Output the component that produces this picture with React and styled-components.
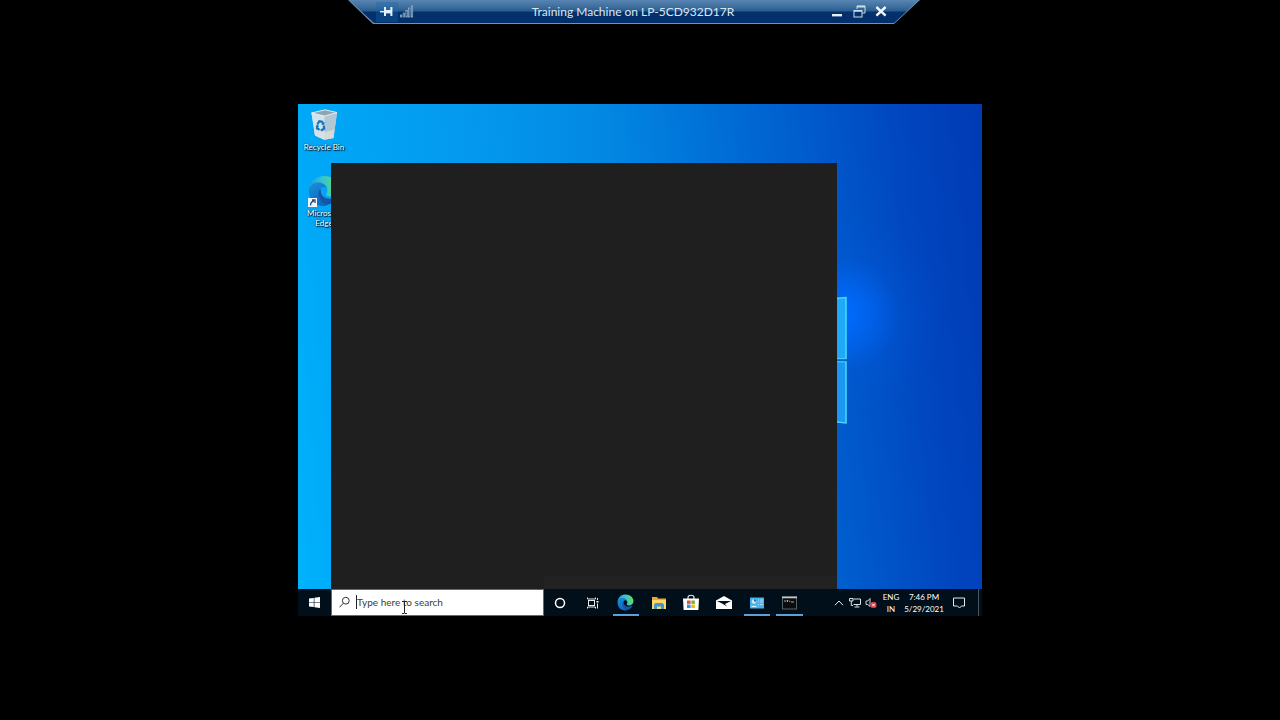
import React, { useState } from 'react';
import styled, { createGlobalStyle } from 'styled-components';

const GlobalStyle = createGlobalStyle`
  * {
    box-sizing: border-box;
  }

  body {
    margin: 0;
    background: #000;
    font-family: Lato, 'Open Sans', sans-serif;
  }

  button {
    padding: 0;
    border: none;
    background: none;
    color: inherit;
    font: inherit;
  }
`;

const Page = styled.div`
  position: relative;
  display: flex;
  align-items: center;
  justify-content: center;
  min-height: 100vh;
  background: #000;
`;

/* Connection bar */

const ConnectionBar = styled.header`
  position: absolute;
  top: 0;
  left: 50%;
  width: 572px;
  max-width: 100%;
  height: 24px;
  margin-left: -292px;
  padding: 0 30px 1px 28px;
  display: grid;
  grid-template-columns: 1fr auto 1fr;
  align-items: center;
  color: #dbe8f4;
  background: #6d93b8;
  clip-path: polygon(0 0, 100% 0, 546px 100%, 25px 100%);
  isolation: isolate;

  &::before {
    content: '';
    position: absolute;
    inset: 0 1px 1px;
    z-index: -1;
    background: linear-gradient(#5885b3 0, #41719f 6px, #2a5c92 11px, #043169 12px, #02306c 23px);
    clip-path: polygon(0 0, 100% 0, 545px 100%, 25px 100%);
  }
`;

const BarGroup = styled.div`
  display: flex;
  align-items: center;
  justify-content: ${({ $end }) => ($end ? 'flex-end' : 'flex-start')};
  gap: ${({ $end }) => ($end ? '4px' : '0')};
`;

const BarTitle = styled.h1`
  margin: 0;
  font-size: 12px;
  font-weight: 400;
  line-height: 20px;
  white-space: nowrap;
`;

const BarButton = styled.button`
  display: grid;
  place-items: center;
  width: ${({ $pinned }) => ($pinned ? '22px' : '18px')};
  height: 20px;
  background: ${({ $pinned }) => ($pinned ? 'rgba(24, 104, 176, 0.35)' : 'none')};
`;

/* Remote desktop */

const Screen = styled.main`
  display: flex;
  flex-direction: column;
  width: 100%;
  max-width: 684px;
  min-height: 512px;
  overflow: hidden;
`;

const Desktop = styled.section`
  position: relative;
  flex: 1;
  display: flex;
  background:
    radial-gradient(circle at 545px 210px, rgba(0, 110, 255, 0.95) 0, rgba(0, 104, 250, 0.75) 24px, rgba(0, 92, 225, 0.25) 56px, rgba(0, 80, 200, 0) 100px),
    linear-gradient(84deg, #00b2fc 0%, #00a8f7 8%, #0499ee 30%, #0288e3 48%, #006ed6 64%, #0058ca 78%, #0047c0 88%, #003ab3 100%);
`;

const IconColumn = styled.div`
  display: flex;
  flex-direction: column;
  gap: 14px;
  width: 52px;
  padding-top: 3px;
`;

const DesktopIcon = styled.button`
  display: flex;
  flex-direction: column;
  align-items: center;
  min-height: 52px;
`;

const IconLabel = styled.span`
  width: 46px;
  color: #fff;
  font-size: 8px;
  line-height: 10px;
  text-align: center;
  text-shadow: 1px 1px 1px #000, 0 0 2px rgba(0, 0, 0, 0.8);
`;

const WindowsLogo = styled.svg`
  position: absolute;
  top: 188px;
  left: 427px;
`;

const SearchFlyout = styled.div`
  position: absolute;
  inset: 59px 145px 0 33px;
  display: flex;
  align-items: flex-end;
  justify-content: flex-end;
  background: #1f1f1f;
`;

const FlyoutFooter = styled.div`
  width: 293px;
  height: 13px;
  background: #222;
`;

/* Taskbar */

const Taskbar = styled.footer`
  display: flex;
  height: 27px;
  color: #fff;
  background: #010f1b;
`;

const StartButton = styled.button`
  display: grid;
  place-items: center;
  width: 33px;
`;

const SearchBox = styled.label`
  position: relative;
  display: flex;
  align-items: center;
  gap: 6px;
  width: 213px;
  padding: 0 0 2px 7px;
  background: #fff;
  border: 1px solid #0f7fdc;
`;

const SearchInput = styled.input`
  flex: 1;
  min-width: 0;
  padding: 0;
  border: none;
  border-left: 1px solid #222;
  outline: none;
  height: 14px;
  background: none;
  color: #222;
  font-family: inherit;
  font-size: 10px;
  line-height: 14px;

  &::placeholder {
    color: #3c3c3c;
    opacity: 1;
  }
`;

const Pointer = styled.svg`
  position: absolute;
  top: 11px;
  left: 69px;
`;

const AppList = styled.nav`
  display: flex;
  width: 262px;
`;

const AppButton = styled.button`
  flex: 1;
  display: grid;
  place-items: center;
  position: relative;

  &::after {
    content: '';
    position: absolute;
    right: 3px;
    bottom: 0;
    left: 3px;
    height: 2px;
    background: ${({ $running }) => ($running ? '#5d9fd6' : 'transparent')};
  }
`;

const Tray = styled.div`
  display: flex;
  align-items: center;
  margin-left: auto;
`;

const TrayButton = styled.button`
  display: grid;
  place-items: center;
  width: ${({ $width }) => $width || 16}px;
  height: 27px;
  font-size: 8px;
  line-height: 12px;
  text-align: center;
  white-space: nowrap;
`;

const Lines = styled.span`
  display: flex;
  flex-direction: column;
  align-items: center;
`;

const ShowDesktop = styled.button`
  width: 4px;
  height: 27px;
  margin-left: 5px;
  border-left: 1px solid #4a545e;
`;

/* Icons */

const PinIcon = () => (
  <svg width="14" height="12" viewBox="0 0 14 12" fill="#e4f0fa">
    <rect x="0" y="5" width="5" height="1.4" />
    <rect x="4" y="1" width="2" height="9" />
    <rect x="6" y="4" width="5" height="3.4" />
    <rect x="10.4" y="1" width="2" height="9" />
  </svg>
);

const SignalIcon = () => (
  <svg width="14" height="13" viewBox="0 0 14 13" fill="#1d4a80" stroke="#9dbad6" strokeWidth="0.7">
    <rect x="0.5" y="10" width="1.4" height="2" />
    <rect x="3.2" y="8" width="1.4" height="4" />
    <rect x="5.9" y="5.5" width="1.4" height="6.5" />
    <rect x="8.6" y="3" width="1.4" height="9" />
    <rect x="11.3" y="1" width="1.4" height="11" />
  </svg>
);

const MinimizeIcon = () => (
  <svg width="12" height="12" viewBox="0 0 12 12">
    <rect x="1" y="8" width="10" height="2.4" fill="#e8f1f9" />
  </svg>
);

const RestoreIcon = () => (
  <svg width="13" height="13" viewBox="0 0 13 13" fill="none" stroke="#c9dcea">
    <path d="M4 4V1h8v7H9" />
    <path d="M4 1.6h8" strokeWidth="1.6" />
    <rect x="1" y="5.5" width="8" height="6.5" />
    <path d="M1 6h8" strokeWidth="1.6" />
  </svg>
);

const CloseIcon = () => (
  <svg width="12" height="12" viewBox="0 0 12 12" stroke="#eff6fa" strokeWidth="2.4">
    <path d="M1.4 1l9.2 8.6M10.6 1l-9.2 8.6" />
  </svg>
);

const RecycleBinIcon = () => (
  <svg width="30" height="35" viewBox="0 0 30 35">
    <path d="M2.500 6L16 2.800 28 5.500 24.500 31l-9 1.800L6 28.500z" fill="#c9dce6" />
    <path d="M2.500 6L15.500 9l-.2 23.800L6 28.500z" fill="#d3e3ec" />
    <path d="M15.500 9L28 5.500 24.500 31l-9.200 1.800z" fill="#b1c7d3" />
    <path d="M5 22l10.300 3.500 10-3L24.500 31l-9.200 1.800L6 28.500z" fill="#dedfdf" opacity="0.8" />
    <path d="M2.500 6L16 2.800 28 5.500 15.500 9z" fill="#8ba5b3" stroke="#eef7fb" strokeWidth="0.8" />
    <g fill="none" stroke="#1474c4" strokeWidth="2.200">
      <path d="M8.500 17.200l1.800-3 2.800.6 1 2" />
      <path d="M14.600 18.500l.6 3.200-2.500 1.400" />
      <path d="M10.600 22.800l-2.600-1.300.4-2.500" />
    </g>
    <path d="M12 17.400l3.200.7.4-3.200zM13.400 21.200l-2.400 1.800 2.400 1.800zM6.500 19.400l2-2.400 1.500 2.700z" fill="#1474c4" />
  </svg>
);

const EdgeIcon = ({ size, id }) => (
  <svg width={size} height={size} viewBox="0 0 32 32">
    <defs>
      <linearGradient id={`${id}-top`} x1="0" y1="0.6" x2="1" y2="0.5">
        <stop offset="0" stopColor="#1e9be0" />
        <stop offset="0.5" stopColor="#35c4d2" />
        <stop offset="1" stopColor="#68dd58" />
      </linearGradient>
      <linearGradient id={`${id}-left`} x1="0" y1="0" x2="0.4" y2="1">
        <stop offset="0" stopColor="#1a8fd8" />
        <stop offset="1" stopColor="#0f68bd" />
      </linearGradient>
    </defs>
    <path d="M1 15C2 6 8 1 16 1c9 0 15 6 15 12.500 0 5-4 8-8.500 8-3.500 0-5-1.500-4-3 1-1.500 1.200-3 .5-5C17 9.500 13 8 9.500 8.500 5 9 2 12 1 15z" fill={`url(#${id}-top)`} />
    <path d="M1 16c0-5 4-8.500 9-8.500 5 0 8 2.500 9 5.500-2-1.500-5-1.500-6.500.5C9 18 12 27 20 29.500c-1.500 1-3 1.500-5 1.500C7 31 1 24.500 1 16z" fill={`url(#${id}-left)`} />
    <path d="M12.500 13.500C8.500 18 11 27 19 30c4.500-.8 8-3.500 10.200-7 .4-.8-.2-1.200-.9-.8-7 3.300-14.300.8-15.300-4.400-.3-1.600-.3-3-.5-4.300z" fill="#1554a6" />
  </svg>
);

const ShortcutBadge = styled.svg`
  position: absolute;
  left: 0;
  bottom: 1px;
`;

const ShortcutIcon = styled.span`
  position: relative;
  display: grid;
  place-items: center;
  width: 32px;
  height: 35px;
`;

const StartIcon = () => (
  <svg width="11" height="11" viewBox="0 0 11 11" fill="#fff">
    <path d="M0 1.600l4.800-.7v4.300H0zM5.400.8L11 0v5.200H5.400zM0 5.800h4.800v4.300L0 9.400zM5.400 5.800H11V11l-5.600-.8z" />
  </svg>
);

const SearchIcon = () => (
  <svg width="11" height="12" viewBox="0 0 11 12" fill="none" stroke="#333">
    <circle cx="6.800" cy="4.700" r="3.400" />
    <path d="M4.400 7.200L.5 11.300" />
  </svg>
);

const CortanaIcon = () => (
  <svg width="12" height="12" viewBox="0 0 12 12" fill="none" stroke="#fff" strokeWidth="1.500">
    <circle cx="6" cy="6" r="4.500" />
  </svg>
);

const TaskViewIcon = () => (
  <svg width="13" height="12" viewBox="0 0 13 12" fill="none" stroke="#e6eaed">
    <rect x="1.500" y="3.500" width="6" height="5" />
    <path d="M.5.5v1.500h8V.5M.5 11.500V10h8v1.500M10.500 1v2M10.500 6.500v5" />
    <rect x="9.500" y="4" width="2" height="1.500" fill="#fff" stroke="none" />
  </svg>
);

const ExplorerIcon = () => (
  <svg width="16" height="14" viewBox="0 0 16 14">
    <path d="M1 1h5l1 1.500h8V13H1z" fill="#e5aa2c" />
    <path d="M1 4h14v9H1z" fill="#fbd869" />
    <path d="M3 13V8.500L4.500 7h7L13 8.500V13h-3v-2.500H6V13z" fill="#4598c9" />
  </svg>
);

const StoreIcon = () => (
  <svg width="16" height="17" viewBox="0 0 16 17">
    <path d="M5 5V3.500C5 .5 11 .5 11 3.500V5" fill="none" stroke="#dfe5e8" strokeWidth="1.200" />
    <path d="M0 4.500h16l-.6 11.500H.6z" fill="#fff" />
    <rect x="4" y="6.500" width="3.600" height="3.400" fill="#e8532b" />
    <rect x="8.300" y="6.500" width="3.600" height="3.400" fill="#78b72b" />
    <rect x="4" y="10.600" width="3.600" height="3.400" fill="#2494dc" />
    <rect x="8.300" y="10.600" width="3.600" height="3.400" fill="#f5b614" />
  </svg>
);

const MailIcon = () => (
  <svg width="16" height="14" viewBox="0 0 16 14">
    <path d="M0 4.500L8 0l8 4.500V13H0z" fill="#fff" />
    <path d="M1 5h14L9 8l2 2.500L6.500 7.800z" fill="#07131c" />
  </svg>
);

const ControlPanelIcon = () => (
  <svg width="14" height="12" viewBox="0 0 14 12">
    <rect width="14" height="11" y="0.500" rx="0.500" fill="#48b2ed" />
    <circle cx="4" cy="4.500" r="2.200" fill="#c8ebfb" />
    <path d="M4 4.500V2.300a2.200 2.200 0 0 1 2.200 2.200z" fill="#1766ae" />
    <path d="M8 3h1M10 3h3M8 5h1M10 5h3M8 7.500h1M10 7.500h3" stroke="#a5dcf8" />
    <path d="M1.500 9.500h5" stroke="#d4f0fc" strokeWidth="1.200" />
  </svg>
);

const TerminalIcon = () => (
  <svg width="16" height="14" viewBox="0 0 16 14">
    <rect x="0.500" y="0.500" width="14" height="12.500" fill="#0b0c0d" stroke="#596064" />
    <path d="M0 1.500h15" stroke="#bfc5c9" strokeWidth="1.600" />
    <path d="M2 5h2.500M5.500 4v2M7 4.500l1 1.500M9 6h3" stroke="#b5babd" strokeWidth="0.900" />
  </svg>
);

const ChevronIcon = () => (
  <svg width="10" height="6" viewBox="0 0 10 6" fill="none" stroke="#e8ecef">
    <path d="M1 5.200L5 1l4 4.200" />
  </svg>
);

const NetworkIcon = () => (
  <svg width="12" height="11" viewBox="0 0 12 11" fill="none" stroke="#dde2e6">
    <path d="M4.500 2h7v5.500h-7M8 7.500v2M5.500 10h5" />
    <path d="M.5 1.500h3.500v2.500H.5zM2.300 4v4.500H4" />
  </svg>
);

const VolumeIcon = () => (
  <svg width="12" height="12" viewBox="0 0 12 12">
    <path d="M1 4h1.800L5 1.500v8L2.800 7.500H1z" fill="none" stroke="#e3e7ea" strokeWidth="0.900" />
    <rect x="5.500" y="5" width="6" height="6" rx="2" fill="#dd3a44" />
    <path d="M7.200 6.700l2.600 2.600M9.800 6.700L7.200 9.300" stroke="#fff" />
  </svg>
);

const NotificationIcon = () => (
  <svg width="12" height="12" viewBox="0 0 12 12" fill="none" stroke="#e6eaed">
    <path d="M.5 1h11v8H8.500L6.500 11 4.500 9h-4z" />
  </svg>
);

const apps = [
  { name: 'Cortana', Icon: CortanaIcon },
  { name: 'Task View', Icon: TaskViewIcon },
  { name: 'Microsoft Edge', Icon: () => <EdgeIcon size={17} id="taskbar-edge" />, running: true },
  { name: 'File Explorer', Icon: ExplorerIcon },
  { name: 'Microsoft Store', Icon: StoreIcon },
  { name: 'Mail', Icon: MailIcon },
  { name: 'Control Panel', Icon: ControlPanelIcon, running: true },
  { name: 'Command Prompt', Icon: TerminalIcon, running: true },
];

const TopBar = () => (
  <ConnectionBar>
    <BarGroup>
      <BarButton $pinned aria-label="Pin"><PinIcon /></BarButton>
      <BarButton aria-label="Connection quality"><SignalIcon /></BarButton>
    </BarGroup>
    <BarTitle>Training Machine on LP-5CD932D17R</BarTitle>
    <BarGroup $end>
      <BarButton aria-label="Minimize"><MinimizeIcon /></BarButton>
      <BarButton aria-label="Restore"><RestoreIcon /></BarButton>
      <BarButton aria-label="Close"><CloseIcon /></BarButton>
    </BarGroup>
  </ConnectionBar>
);

const Wallpaper = () => (
  <WindowsLogo width="122" height="133" viewBox="0 0 122 133" aria-hidden="true">
    <g stroke="#45dcfb" strokeWidth="1.500">
      <path d="M0 16L121 5.500v61.500H0z" fill="#1fa9f8" />
      <path d="M0 69.500h121V131L0 118z" fill="#1b98f4" />
    </g>
    <path d="M0 68.200h122" stroke="#0565c4" strokeWidth="2" />
  </WindowsLogo>
);

const App = () => {
  const [query, setQuery] = useState('');

  return (
    <>
      <GlobalStyle />
      <Page>
        <TopBar />
        <Screen>
          <Desktop>
            <IconColumn>
              <DesktopIcon>
                <RecycleBinIcon />
                <IconLabel>Recycle Bin</IconLabel>
              </DesktopIcon>
              <DesktopIcon>
                <ShortcutIcon>
                  <EdgeIcon size={32} id="desktop-edge" />
                  <ShortcutBadge width="9" height="9" viewBox="0 0 9 9">
                    <rect width="9" height="9" fill="#f4f8fb" />
                    <path d="M2.500 7.500C2.500 5 3.500 3.500 6 3M4 2h3v3" fill="none" stroke="#1f4f8d" strokeWidth="1.300" />
                  </ShortcutBadge>
                </ShortcutIcon>
                <IconLabel>Microsoft Edge</IconLabel>
              </DesktopIcon>
            </IconColumn>
            <Wallpaper />
            <SearchFlyout>
              <FlyoutFooter />
            </SearchFlyout>
          </Desktop>
          <Taskbar>
            <StartButton aria-label="Start"><StartIcon /></StartButton>
            <SearchBox>
              <SearchIcon />
              <SearchInput
                aria-label="Type here to search"
                placeholder="Type here to search"
                value={query}
                onChange={(e) => setQuery(e.target.value)}
              />
              <Pointer width="7" height="13" viewBox="0 0 7 13" fill="none" stroke="#222">
                <path d="M1 .5h2l.5.5.5-.5h2M3.500 1v11M1 12.500h2l.5-.5.5.5h2" />
              </Pointer>
            </SearchBox>
            <AppList>
              {apps.map(({ name, Icon, running }) => (
                <AppButton key={name} aria-label={name} $running={running}>
                  <Icon />
                </AppButton>
              ))}
            </AppList>
            <Tray>
              <TrayButton aria-label="Show hidden icons"><ChevronIcon /></TrayButton>
              <TrayButton aria-label="Network"><NetworkIcon /></TrayButton>
              <TrayButton aria-label="Volume"><VolumeIcon /></TrayButton>
              <TrayButton $width={24}>
                <Lines>
                  <span>ENG</span>
                  <span>IN</span>
                </Lines>
              </TrayButton>
              <TrayButton $width={42}>
                <Lines>
                  <span>7:46 PM</span>
                  <span>5/29/2021</span>
                </Lines>
              </TrayButton>
              <TrayButton $width={28} aria-label="Notifications"><NotificationIcon /></TrayButton>
              <ShowDesktop aria-label="Show desktop" />
            </Tray>
          </Taskbar>
        </Screen>
      </Page>
    </>
  );
};

export default App;
